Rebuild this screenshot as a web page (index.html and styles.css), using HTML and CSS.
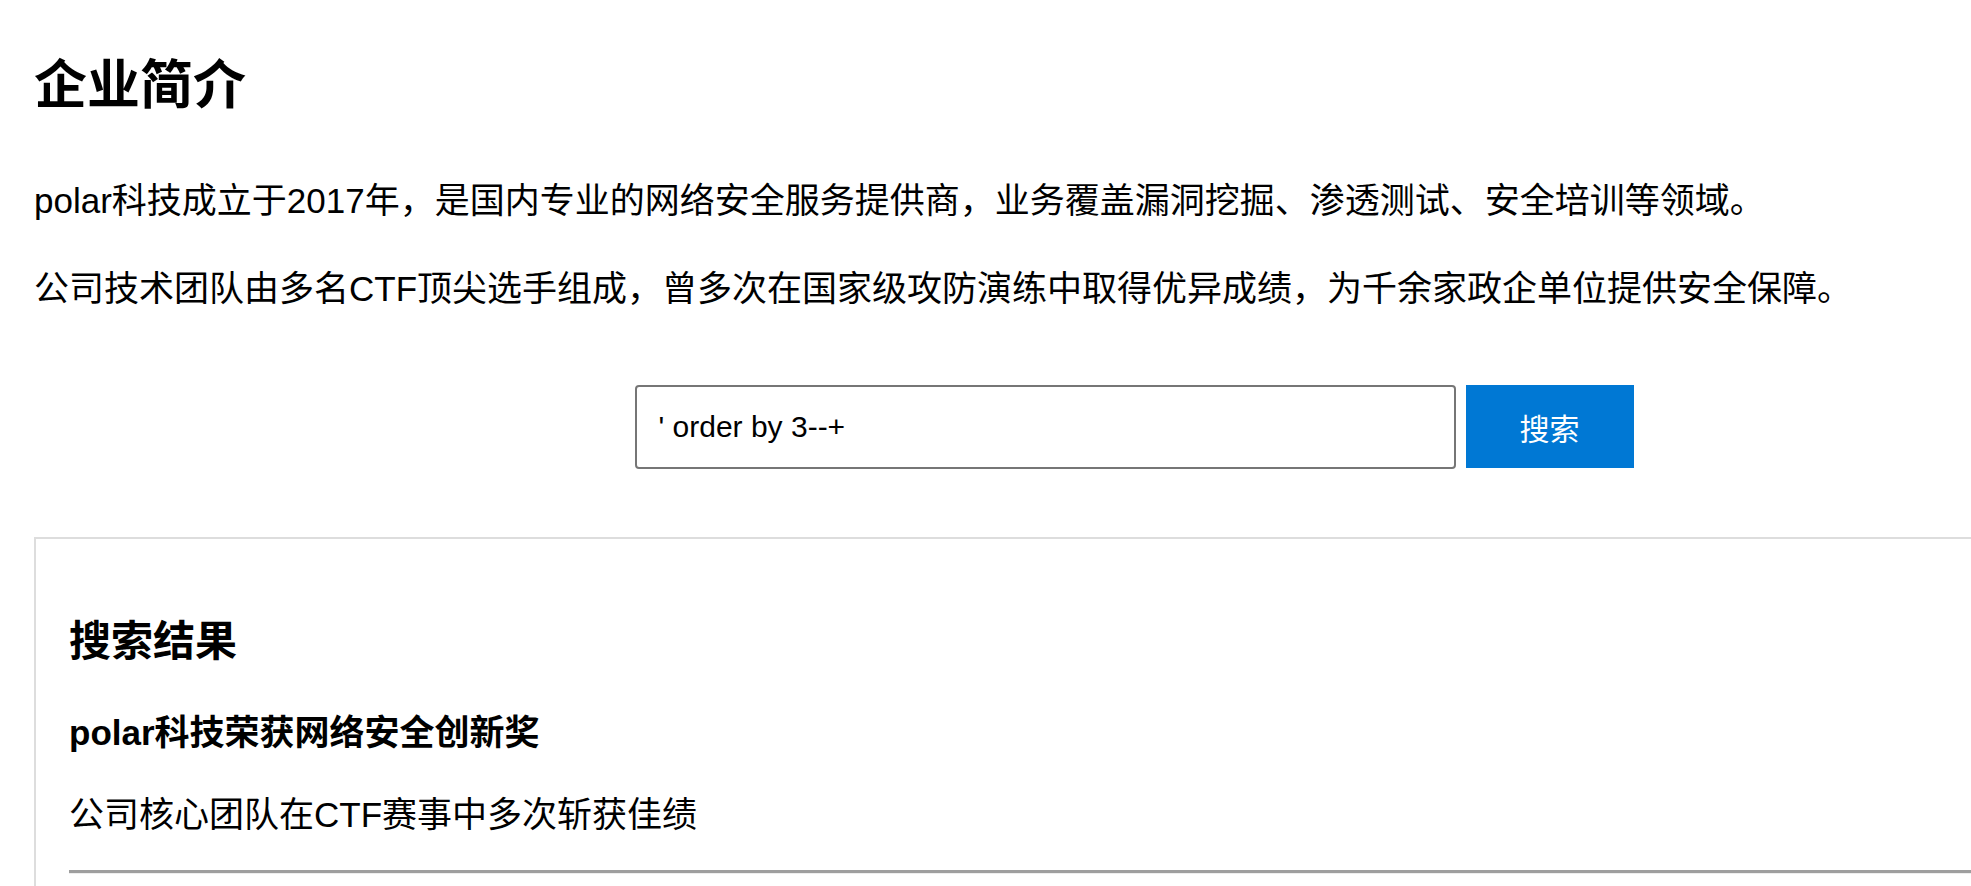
FILE: index.html
```html
<!DOCTYPE html>
<html lang="zh-CN">
<head>
<meta charset="utf-8">
<title>企业简介</title>
<link rel="stylesheet" href="styles.css">
</head>
<body>
<div class="page">
  <h1 class="title">企业简介</h1>
  <p class="lead">polar科技成立于2017年，是国内专业的网络安全服务提供商，业务覆盖漏洞挖掘、渗透测试、安全培训等领域。</p>
  <p class="lead lead-second">公司技术团队由多名CTF顶尖选手组成，曾多次在国家级攻防演练中取得优异成绩，为千余家政企单位提供安全保障。</p>
  <form class="search" onsubmit="return false;">
    <input class="search-input" type="text" value="' order by 3--+">
    <button class="search-btn" type="submit">搜索</button>
  </form>
  <section class="results">
    <h2 class="results-title">搜索结果</h2>
    <h3 class="item-title">polar科技荣获网络安全创新奖</h3>
    <p class="item-desc">公司核心团队在CTF赛事中多次斩获佳绩</p>
    <hr class="item-sep">
  </section>
</div>
</body>
</html>
```

FILE: styles.css
```css
html, body {
  margin: 0;
  padding: 0;
  background: #fff;
  overflow: hidden;
}

body {
  color: #000;
  font-family: "Liberation Sans", "Noto Sans CJK SC", sans-serif;
}

.page {
  width: 2200px;
  padding-left: 34px;
}

.title {
  margin: 55px 0 0;
  font-size: 53px;
  line-height: 62px;
  font-weight: 700;
}

.lead {
  margin: 59px 0 0;
  font-size: 35px;
  line-height: 50px;
  white-space: nowrap;
}

.lead-second {
  margin-top: 38px;
}

.search {
  margin-top: 71px;
  display: flex;
  justify-content: center;
  align-items: flex-start;
  gap: 10px;
}

.search-input {
  box-sizing: border-box;
  width: 821px;
  height: 84px;
  margin: 0;
  padding: 0 22px;
  border: 2px solid #767676;
  border-radius: 4px;
  font-family: "Liberation Sans", "Noto Sans CJK SC", sans-serif;
  font-size: 30px;
  color: #000;
  background: #fff;
  outline: none;
}

.search-btn {
  box-sizing: border-box;
  width: 168px;
  height: 83px;
  margin: 0;
  padding: 0;
  border: none;
  background: #0078d4;
  color: #fff;
  font-family: "Liberation Sans", "Noto Sans CJK SC", sans-serif;
  font-size: 30px;
}

.results {
  box-sizing: border-box;
  width: 100%;
  margin-top: 68px;
  border: 2px solid #ddd;
  padding: 78px 33px 60px;
}

.results-title {
  margin: 0;
  font-size: 42px;
  line-height: 50px;
  font-weight: 700;
}

.item-title {
  margin: 43px 0 0;
  font-size: 35px;
  line-height: 46px;
  font-weight: 700;
}

.item-desc {
  margin: 36px 0 0;
  font-size: 35px;
  line-height: 46px;
}

.item-sep {
  margin: 32px 0 0;
  border: 0;
  border-top: 3px solid #9e9e9e;
  border-bottom: 1px solid #eee;
  height: 0;
}
```
